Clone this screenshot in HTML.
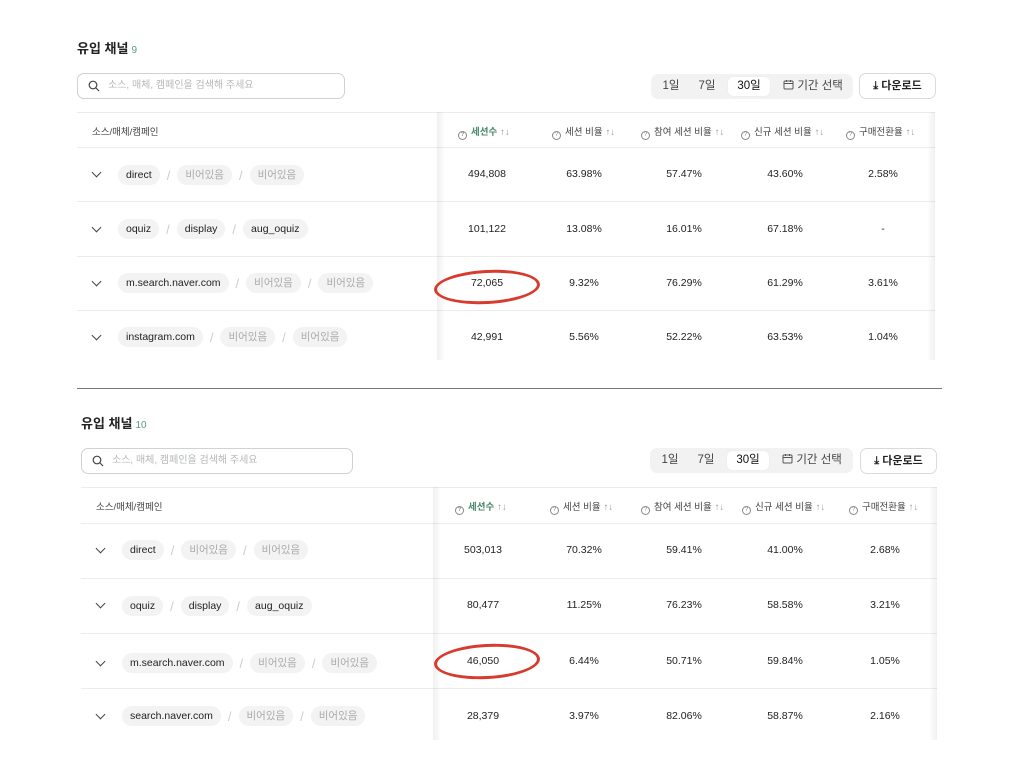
<!DOCTYPE html>
<html><head><meta charset="utf-8"><style>
*{box-sizing:border-box;margin:0;padding:0}
body{width:1024px;height:768px;background:#fff;position:relative;overflow:hidden;font-family:"Liberation Sans","Noto Sans CJK KR",sans-serif;color:#222}
.a{position:absolute}
.title{font-size:13px;font-weight:bold;color:#222}
.title span{color:#5c9a7f;font-size:10px;font-weight:normal;margin-left:3px}
.search{border:1px solid #cfd2d0;border-radius:7px;height:26px;font-size:10px;color:#b5b8b6;padding-left:30px;line-height:24px}
.search svg{position:absolute;left:10px;top:6px}
.seg{background:#f1f2f1;border-radius:7px;height:25px;font-size:11.5px;color:#444}
.seg div{position:absolute;top:3px;height:19px;line-height:19px;text-align:center}
.seg .on{background:#fff;border-radius:5px;color:#111;box-shadow:0 0 1px rgba(0,0,0,.1)}
.dl{border:1px solid #d9dbd9;border-radius:7px;height:26px;font-size:11px;font-weight:bold;line-height:24px;text-align:center;color:#222}
.line{height:1px;background:#ececec}
.th{font-size:9.5px;color:#444;white-space:nowrap}
.th .q{display:inline-block;width:9px;height:9px;border:1px solid #888;border-radius:50%;font-size:6px;line-height:7px;text-align:center;color:#888;vertical-align:-1px;margin-right:4px}
.th .s{color:#999;margin-left:3px}
.th.g{color:#4a8a6d;font-weight:bold}
.num{font-size:10.5px;color:#222;text-align:center;width:100px;margin-left:-50px}
.chev{width:7px;height:7px;border-right:1.3px solid #444;border-bottom:1.3px solid #444;transform:rotate(45deg)}
.chips{font-size:10.5px;white-space:nowrap;display:flex;align-items:center}
.chip{background:#f2f3f2;border-radius:10px;height:20px;line-height:20px;padding:0 8px;color:#222}
.chip.e{color:#aaa}
.sl{color:#ccc;margin:0 7px;font-size:13px}
.shadowL{width:8px;background:linear-gradient(to right,rgba(0,0,0,.06),rgba(0,0,0,0))}
.shadowR{width:8px;background:linear-gradient(to left,rgba(0,0,0,.06),rgba(0,0,0,0))}
.ell{border:3px solid #d83a2e;border-radius:50%;transform:rotate(-3deg)}
</style></head><body>

<!-- PANEL 1 -->
<div class="a title" style="left:77px;top:38px">유입 채널<span>9</span></div>
<div class="a search" style="left:77px;top:73px;width:268px"><svg width="12" height="12" viewBox="0 0 12 12"><circle cx="5" cy="5" r="3.8" fill="none" stroke="#444" stroke-width="1.2"/><path d="M8 8l3 3" stroke="#444" stroke-width="1.2"/></svg>소스, 매체, 캠페인을 검색해 주세요</div>
<div class="a seg" style="left:651px;top:74px;width:202px">
<div style="left:6px;width:28px">1일</div><div style="left:42px;width:28px">7일</div>
<div class="on" style="left:77px;width:42px">30일</div>
<div style="left:124px;width:76px"><svg width="11" height="11" viewBox="0 0 11 11" style="vertical-align:-1px"><rect x="1" y="2" width="9" height="8" rx="1" fill="none" stroke="#555"/><path d="M1 4.5h9M3.5 1v2M7.5 1v2" stroke="#555"/></svg> 기간 선택</div></div>
<div class="a dl" style="left:859px;top:73px;width:77px">⤓ 다운로드</div>
<div class="a line" style="left:77px;top:112px;width:858px"></div>
<div class="a line" style="left:77px;top:147px;width:858px"></div>
<div class="a line" style="left:77px;top:201px;width:858px"></div>
<div class="a line" style="left:77px;top:256px;width:858px"></div>
<div class="a line" style="left:77px;top:310px;width:858px"></div>
<div class="a shadowL" style="left:437px;top:112px;height:248px"></div>
<div class="a shadowR" style="left:927px;top:112px;height:248px"></div>
<div class="a th" style="left:92px;top:124px">소스/매체/캠페인</div>
<div class="a th g" style="left:458px;top:124px"><span class="q">?</span>세션수<span class="s">↑↓</span></div>
<div class="a th" style="left:552px;top:124px"><span class="q">?</span>세션 비율<span class="s">↑↓</span></div>
<div class="a th" style="left:641px;top:124px"><span class="q">?</span>참여 세션 비율<span class="s">↑↓</span></div>
<div class="a th" style="left:741px;top:124px"><span class="q">?</span>신규 세션 비율<span class="s">↑↓</span></div>
<div class="a th" style="left:846px;top:124px"><span class="q">?</span>구매전환율<span class="s">↑↓</span></div>

<div class="a chev" style="left:93px;top:169px"></div>
<div class="a chips" style="left:118px;top:165px"><span class="chip">direct</span><span class="sl">/</span><span class="chip e">비어있음</span><span class="sl">/</span><span class="chip e">비어있음</span></div>
<div class="a chev" style="left:93px;top:224px"></div>
<div class="a chips" style="left:118px;top:219px"><span class="chip">oquiz</span><span class="sl">/</span><span class="chip">display</span><span class="sl">/</span><span class="chip">aug_oquiz</span></div>
<div class="a chev" style="left:93px;top:278px"></div>
<div class="a chips" style="left:118px;top:273px"><span class="chip">m.search.naver.com</span><span class="sl">/</span><span class="chip e">비어있음</span><span class="sl">/</span><span class="chip e">비어있음</span></div>
<div class="a chev" style="left:93px;top:332px"></div>
<div class="a chips" style="left:118px;top:327px"><span class="chip">instagram.com</span><span class="sl">/</span><span class="chip e">비어있음</span><span class="sl">/</span><span class="chip e">비어있음</span></div>

<div class="a num" style="left:487px;top:168px">494,808</div><div class="a num" style="left:584px;top:168px">63.98%</div><div class="a num" style="left:684px;top:168px">57.47%</div><div class="a num" style="left:785px;top:168px">43.60%</div><div class="a num" style="left:883px;top:168px">2.58%</div>
<div class="a num" style="left:487px;top:223px">101,122</div><div class="a num" style="left:584px;top:223px">13.08%</div><div class="a num" style="left:684px;top:223px">16.01%</div><div class="a num" style="left:785px;top:223px">67.18%</div><div class="a num" style="left:883px;top:223px">-</div>
<div class="a num" style="left:487px;top:277px">72,065</div><div class="a num" style="left:584px;top:277px">9.32%</div><div class="a num" style="left:684px;top:277px">76.29%</div><div class="a num" style="left:785px;top:277px">61.29%</div><div class="a num" style="left:883px;top:277px">3.61%</div>
<div class="a num" style="left:487px;top:331px">42,991</div><div class="a num" style="left:584px;top:331px">5.56%</div><div class="a num" style="left:684px;top:331px">52.22%</div><div class="a num" style="left:785px;top:331px">63.53%</div><div class="a num" style="left:883px;top:331px">1.04%</div>
<div class="a ell" style="left:434px;top:270px;width:106px;height:34px"></div>

<div class="a" style="left:77px;top:388px;width:865px;height:1px;background:#777"></div>

<!-- PANEL 2 -->
<div class="a title" style="left:81px;top:413px">유입 채널<span>10</span></div>
<div class="a search" style="left:81px;top:448px;width:272px"><svg width="12" height="12" viewBox="0 0 12 12"><circle cx="5" cy="5" r="3.8" fill="none" stroke="#444" stroke-width="1.2"/><path d="M8 8l3 3" stroke="#444" stroke-width="1.2"/></svg>소스, 매체, 캠페인을 검색해 주세요</div>
<div class="a seg" style="left:650px;top:448px;width:203px">
<div style="left:6px;width:28px">1일</div><div style="left:42px;width:28px">7일</div>
<div class="on" style="left:77px;width:42px">30일</div>
<div style="left:124px;width:76px"><svg width="11" height="11" viewBox="0 0 11 11" style="vertical-align:-1px"><rect x="1" y="2" width="9" height="8" rx="1" fill="none" stroke="#555"/><path d="M1 4.5h9M3.5 1v2M7.5 1v2" stroke="#555"/></svg> 기간 선택</div></div>
<div class="a dl" style="left:860px;top:448px;width:77px">⤓ 다운로드</div>
<div class="a line" style="left:81px;top:487px;width:856px"></div>
<div class="a line" style="left:81px;top:523px;width:856px"></div>
<div class="a line" style="left:81px;top:578px;width:856px"></div>
<div class="a line" style="left:81px;top:633px;width:856px"></div>
<div class="a line" style="left:81px;top:688px;width:856px"></div>
<div class="a shadowL" style="left:433px;top:487px;height:253px"></div>
<div class="a shadowR" style="left:929px;top:487px;height:253px"></div>
<div class="a th" style="left:96px;top:499px">소스/매체/캠페인</div>
<div class="a th g" style="left:455px;top:499px"><span class="q">?</span>세션수<span class="s">↑↓</span></div>
<div class="a th" style="left:550px;top:499px"><span class="q">?</span>세션 비율<span class="s">↑↓</span></div>
<div class="a th" style="left:641px;top:499px"><span class="q">?</span>참여 세션 비율<span class="s">↑↓</span></div>
<div class="a th" style="left:742px;top:499px"><span class="q">?</span>신규 세션 비율<span class="s">↑↓</span></div>
<div class="a th" style="left:849px;top:499px"><span class="q">?</span>구매전환율<span class="s">↑↓</span></div>

<div class="a chev" style="left:97px;top:545px"></div>
<div class="a chips" style="left:122px;top:540px"><span class="chip">direct</span><span class="sl">/</span><span class="chip e">비어있음</span><span class="sl">/</span><span class="chip e">비어있음</span></div>
<div class="a chev" style="left:97px;top:600px"></div>
<div class="a chips" style="left:122px;top:596px"><span class="chip">oquiz</span><span class="sl">/</span><span class="chip">display</span><span class="sl">/</span><span class="chip">aug_oquiz</span></div>
<div class="a chev" style="left:97px;top:658px"></div>
<div class="a chips" style="left:122px;top:653px"><span class="chip">m.search.naver.com</span><span class="sl">/</span><span class="chip e">비어있음</span><span class="sl">/</span><span class="chip e">비어있음</span></div>
<div class="a chev" style="left:97px;top:711px"></div>
<div class="a chips" style="left:122px;top:706px"><span class="chip">search.naver.com</span><span class="sl">/</span><span class="chip e">비어있음</span><span class="sl">/</span><span class="chip e">비어있음</span></div>

<div class="a num" style="left:483px;top:544px">503,013</div><div class="a num" style="left:584px;top:544px">70.32%</div><div class="a num" style="left:684px;top:544px">59.41%</div><div class="a num" style="left:785px;top:544px">41.00%</div><div class="a num" style="left:885px;top:544px">2.68%</div>
<div class="a num" style="left:483px;top:599px">80,477</div><div class="a num" style="left:584px;top:599px">11.25%</div><div class="a num" style="left:684px;top:599px">76.23%</div><div class="a num" style="left:785px;top:599px">58.58%</div><div class="a num" style="left:885px;top:599px">3.21%</div>
<div class="a num" style="left:483px;top:655px">46,050</div><div class="a num" style="left:584px;top:655px">6.44%</div><div class="a num" style="left:684px;top:655px">50.71%</div><div class="a num" style="left:785px;top:655px">59.84%</div><div class="a num" style="left:885px;top:655px">1.05%</div>
<div class="a num" style="left:483px;top:710px">28,379</div><div class="a num" style="left:584px;top:710px">3.97%</div><div class="a num" style="left:684px;top:710px">82.06%</div><div class="a num" style="left:785px;top:710px">58.87%</div><div class="a num" style="left:885px;top:710px">2.16%</div>
<div class="a ell" style="left:434px;top:644px;width:106px;height:35px"></div>
</body></html>
